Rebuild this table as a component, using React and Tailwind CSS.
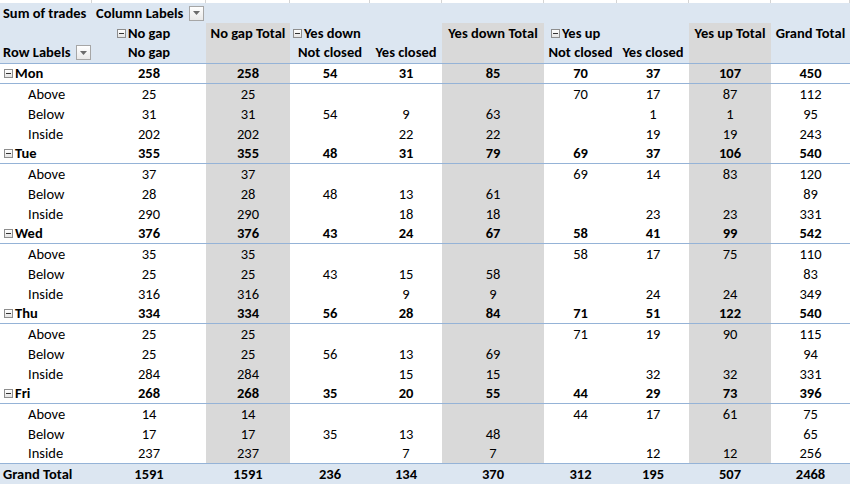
const BLUE = "bg-[#dce6f1]";
const GRAY = "bg-[#d9d9d9]";
const LINE = "border-[#95b3d7]";

const gridCols =
  "grid grid-cols-[92px_114px_84px_80px_72px_102px_73px_72px_82px_79px]";

// columns holding subtotals get the gray fill
const grayCol = [false, false, true, false, false, true, false, false, true, false];

const days = [
  {
    name: "Mon",
    total: ["258", "258", "54", "31", "85", "70", "37", "107", "450"],
    rows: [
      ["Above", "25", "25", "", "", "", "70", "17", "87", "112"],
      ["Below", "31", "31", "54", "9", "63", "", "1", "1", "95"],
      ["Inside", "202", "202", "", "22", "22", "", "19", "19", "243"],
    ],
  },
  {
    name: "Tue",
    total: ["355", "355", "48", "31", "79", "69", "37", "106", "540"],
    rows: [
      ["Above", "37", "37", "", "", "", "69", "14", "83", "120"],
      ["Below", "28", "28", "48", "13", "61", "", "", "", "89"],
      ["Inside", "290", "290", "", "18", "18", "", "23", "23", "331"],
    ],
  },
  {
    name: "Wed",
    total: ["376", "376", "43", "24", "67", "58", "41", "99", "542"],
    rows: [
      ["Above", "35", "35", "", "", "", "58", "17", "75", "110"],
      ["Below", "25", "25", "43", "15", "58", "", "", "", "83"],
      ["Inside", "316", "316", "", "9", "9", "", "24", "24", "349"],
    ],
  },
  {
    name: "Thu",
    total: ["334", "334", "56", "28", "84", "71", "51", "122", "540"],
    rows: [
      ["Above", "25", "25", "", "", "", "71", "19", "90", "115"],
      ["Below", "25", "25", "56", "13", "69", "", "", "", "94"],
      ["Inside", "284", "284", "", "15", "15", "", "32", "32", "331"],
    ],
  },
  {
    name: "Fri",
    total: ["268", "268", "35", "20", "55", "44", "29", "73", "396"],
    rows: [
      ["Above", "14", "14", "", "", "", "44", "17", "61", "75"],
      ["Below", "17", "17", "35", "13", "48", "", "", "", "65"],
      ["Inside", "237", "237", "", "7", "7", "", "12", "12", "256"],
    ],
  },
];

const grandTotal = ["1591", "1591", "236", "134", "370", "312", "195", "507", "2468"];

const Collapse = () => (
  <span className="flex h-[9px] w-[9px] shrink-0 items-center justify-center border border-[#8d8d8d] bg-gradient-to-b from-white to-[#e4e4e4]">
    <span className="h-px w-[5px] bg-[#333]" />
  </span>
);

const Dropdown = () => (
  <span className="flex h-[15px] w-[15px] shrink-0 items-center justify-center border border-[#a6a6a6] bg-gradient-to-b from-white to-[#e9e9e9]">
    <svg width="7" height="4" viewBox="0 0 7 4">
      <path d="M0 0h7L3.5 4z" fill="#6b6b6b" />
    </svg>
  </span>
);

const Cell = ({ i, children, className = "" }) => (
  <div
    className={`flex h-5 items-center justify-center ${grayCol[i + 1] ? GRAY : ""} ${className}`}
  >
    {children}
  </div>
);

const DayRows = ({ day }) => (
  <>
    <div className={`flex h-5 items-center gap-[2px] border-b pl-[4px] font-bold ${LINE}`}>
      <Collapse />
      <span>{day.name}</span>
    </div>
    {day.total.map((v, i) => (
      <Cell key={i} i={i} className={`border-b font-bold ${LINE}`}>
        {v}
      </Cell>
    ))}
    {day.rows.map((r, ri) => {
      const last = ri === 2 && day.name === "Fri";
      const b = last ? `border-b ${LINE}` : "";
      return (
        <div key={ri} className="contents">
          <div className={`flex h-5 items-center pl-[28px] ${b}`}>{r[0]}</div>
          {r.slice(1).map((v, i) => (
            <Cell key={i} i={i} className={b}>
              {v}
            </Cell>
          ))}
        </div>
      );
    })}
  </>
);

export default function App() {
  return (
    <div
      className="h-[484px] w-[850px] overflow-hidden bg-white text-[14.5px] leading-none text-black"
      style={{ fontFamily: "Carlito, Lato, 'Liberation Sans', sans-serif" }}
    >
      <div className={gridCols}>
        {/* bit of the sheet row above the pivot */}
        {grayCol.map((_, i) => (
          <div key={i} className="h-[3px] border-r border-[#d4d4d4]" />
        ))}

        {/* header row 1 */}
        <div className={`flex h-5 items-center pl-[3px] font-bold ${BLUE}`}>Sum of trades</div>
        <div className={`flex h-5 items-center justify-between pl-1 pr-[2px] font-bold ${BLUE}`}>
          <span>Column Labels</span>
          <Dropdown />
        </div>
        <div className={`col-span-8 h-5 ${BLUE}`} />

        {/* header row 2 */}
        <div className={`h-5 ${BLUE}`} />
        <div className={`flex h-5 items-center gap-[2px] pl-[25px] font-bold ${BLUE}`}>
          <Collapse />
          <span>No gap</span>
        </div>
        <div className={`flex h-5 items-center justify-center font-bold ${GRAY}`}>No gap Total</div>
        <div className={`flex h-5 items-center gap-[2px] pl-[3px] font-bold ${BLUE}`}>
          <Collapse />
          <span>Yes down</span>
        </div>
        <div className={`h-5 ${BLUE}`} />
        <div className={`flex h-5 items-center justify-center font-bold ${GRAY}`}>Yes down Total</div>
        <div className={`flex h-5 items-center gap-[2px] pl-[7px] font-bold ${BLUE}`}>
          <Collapse />
          <span>Yes up</span>
        </div>
        <div className={`h-5 ${BLUE}`} />
        <div className={`flex h-5 items-center justify-center font-bold ${GRAY}`}>Yes up Total</div>
        <div className={`flex h-5 items-center justify-center font-bold ${BLUE}`}>Grand Total</div>

        {/* header row 3 */}
        <div className={`flex h-[21px] items-center justify-between border-b pb-px pl-[3px] pr-px font-bold ${LINE} ${BLUE}`}>
          <span>Row Labels</span>
          <Dropdown />
        </div>
        {["No gap", "", "Not closed", "Yes closed", "", "Not closed", "Yes closed", "", ""].map(
          (t, i) => (
            <div
              key={i}
              className={`flex h-[21px] items-center justify-center border-b pb-px font-bold ${LINE} ${grayCol[i + 1] ? GRAY : BLUE}`}
            >
              {t}
            </div>
          )
        )}

        {days.map((d) => (
          <DayRows key={d.name} day={d} />
        ))}

        {/* grand total */}
        <div className={`flex h-5 items-center pl-[3px] font-bold ${BLUE}`}>Grand Total</div>
        {grandTotal.map((v, i) => (
          <div key={i} className={`flex h-5 items-center justify-center font-bold ${BLUE}`}>
            {v}
          </div>
        ))}
      </div>
    </div>
  );
}
